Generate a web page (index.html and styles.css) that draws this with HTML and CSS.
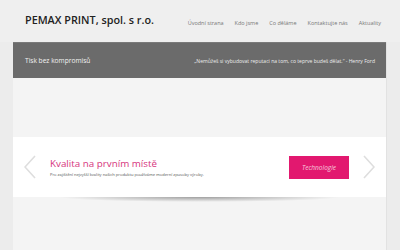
FILE: index.html
```html
<!DOCTYPE html>
<html lang="cs">
<head>
    <meta charset="UTF-8">
    <title>PEMAX PRINT, spol. s r.o.</title>
    <link rel="stylesheet" href="styles.css">
</head>
<body>
    <div id="header">
        <div class="logo">PEMAX PRINT, spol. s r.o.</div>
        <ul class="menu">
            <li><a href="#">Úvodní strana</a></li>
            <li><a href="#">Kdo jsme</a></li>
            <li><a href="#">Co děláme</a></li>
            <li><a href="#">Kontaktujte nás</a></li>
            <li><a href="#">Aktuality</a></li>
        </ul>
    </div>

    <div id="page">
        <div class="band">
            <h2>Tisk bez kompromisů</h2>
            <p class="quote">„Nemůžeš si vybudovat reputaci na tom, co teprve budeš dělat.“ - Henry Ford</p>
        </div>

        <div class="slider">
            <a class="arrow" href="#">
                <svg width="12" height="24" viewBox="0 0 12 24"><polyline points="11,1 1,12 11,23" fill="none" stroke="#dedede" stroke-width="1.6"/></svg>
            </a>
            <div class="slide">
                <h3>Kvalita na prvním místě</h3>
                <p>Pro zajištění nejvyšší kvality našich produktů používáme moderní způsoby výroby.</p>
            </div>
            <a class="button" href="#">Technologie</a>
            <a class="arrow" href="#">
                <svg width="12" height="24" viewBox="0 0 12 24"><polyline points="1,1 11,12 1,23" fill="none" stroke="#dedede" stroke-width="1.6"/></svg>
            </a>
        </div>
        <div class="shadow"></div>
    </div>
</body>
</html>
```

FILE: styles.css
```css
body {
    margin: 0;
    padding: 0;
    background-color: #ececec;
    font-family: "Open Sans", Arial, sans-serif;
    color: #333;
}

#header {
    height: 42px;
    display: flex;
    align-items: center;
    justify-content: space-between;
    padding: 0 19px 0 25px;
    background-color: #efefef;
}

.logo {
    font-size: 10.8px;
    font-weight: 600;
    color: #222;
    margin-top: -3px;
}

.menu {
    list-style: none;
    margin: -5px 0 0 0;
    padding: 0;
    display: flex;
    gap: 11px;
}

.menu a {
    font-size: 5.5px;
    color: #777;
    text-decoration: none;
}

#page {
    margin: 0 13px;
    height: 208px;
    background-color: #f4f4f4;
    border-right: 1px solid #e2e2e2;
}

.band {
    height: 36px;
    display: flex;
    align-items: center;
    justify-content: space-between;
    padding: 0 11px 0 12px;
    background-color: #6b6b6b;
    border-top: 1px solid #7a7a7a;
    box-sizing: border-box;
}

.band h2 {
    margin: 0;
    font-size: 6.6px;
    font-weight: normal;
    color: #f2f2f2;
}

.quote {
    margin: 0;
    font-size: 5.05px;
    color: #eee;
}

.slider {
    margin-top: 59px;
    height: 60px;
    display: flex;
    align-items: center;
    padding: 0 11px 0 11px;
    background-color: #fff;
}

.arrow {
    display: flex;
    width: 12px;
}

.slide {
    flex: 1;
    padding-left: 14px;
}

.slide h3 {
    margin: 0 0 2px 0;
    font-size: 9.8px;
    font-weight: normal;
    color: #d6337d;
}

.slide p {
    margin: 0;
    font-size: 4.05px;
    color: #555;
}

.button {
    width: 60px;
    height: 23px;
    display: flex;
    align-items: center;
    justify-content: center;
    margin-right: 14px;
    background-color: #e2186f;
    color: #f7c9dc;
    font-size: 6.5px;
    font-style: italic;
    text-decoration: none;
}

.shadow {
    height: 5px;
    margin: 0 45px;
    background: radial-gradient(ellipse at 50% 0, rgba(0, 0, 0, 0.35) 0, rgba(0, 0, 0, 0) 70%);
}
```
